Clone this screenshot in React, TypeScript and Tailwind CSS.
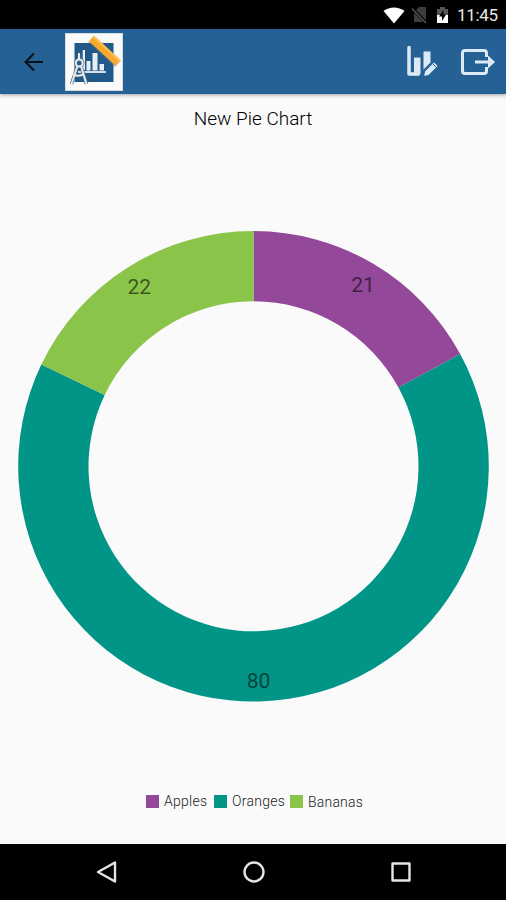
const slices = [
  { label: 'Apples', value: 21, color: '#94489a', swatch: 'bg-[#94489a]', x: 363, y: 61.5 },
  { label: 'Oranges', value: 80, color: '#009586', swatch: 'bg-[#009586]', x: 258.5, y: 458 },
  { label: 'Bananas', value: 22, color: '#8ac449', swatch: 'bg-[#8ac449]', x: 139.2, y: 64 },
];

const CX = 253.5;
const CY = 236.3;
const OUTER = 235.3;
const INNER = 165;

function arcPath(from: number, to: number) {
  const point = (r: number, a: number) => `${CX + r * Math.sin(a)} ${CY - r * Math.cos(a)}`;
  const large = to - from > Math.PI ? 1 : 0;
  return `M${point(OUTER, from)}A${OUTER} ${OUTER} 0 ${large} 1 ${point(OUTER, to)}L${point(INNER, to)}A${INNER} ${INNER} 0 ${large} 0 ${point(INNER, from)}Z`;
}

function StatusBar() {
  return (
    <div className="flex h-[29px] shrink-0 items-center justify-end bg-black pr-2 text-[#e8e8e8]">
      <svg className="mr-[6px] h-[18px] w-[22px]" viewBox="0 0 22 18">
        <path d="M.5 5C6.5.2 15.500.2 21.500 5L11 17.500Z" fill="#fff" />
      </svg>
      <svg className="mr-[8px] h-[18px] w-[17px]" viewBox="0 0 17 18">
        <path d="M5 4 8 1h7v15H3V6Z" fill="#3d3d3d" />
        <path d="M.5 1.500 15.500 17" stroke="#000" strokeWidth="3" />
        <path d="M1 2.500 15 17" stroke="#555" strokeWidth="1.400" />
      </svg>
      <svg className="mr-[8px] h-[18px] w-[13px]" viewBox="0 0 13 18">
        <path d="M1 3h3V1h5v2h3v6H1Z" fill="#555" />
        <path d="M1 9h11v8H1Z" fill="#fff" />
        <path d="M7.500 4 3 10.500h3V15l4-6.500H7.500Z" fill="#000" />
      </svg>
      <span className="w-[41px] whitespace-nowrap text-[17px] leading-5 tracking-[-0.3px]">11:45</span>
    </div>
  );
}

function Logo() {
  return (
    <svg className="ml-[21px] h-[58px] w-[58px]" viewBox="0 0 58 58">
      <rect x=".5" y=".5" width="57" height="57" fill="#fafafa" stroke="#d4dce2" />
      <rect x="9.500" y="10" width="39" height="39" fill="#20598a" />
      <path d="M13 39h28" stroke="#e8eff4" strokeWidth="1.800" />
      <path d="M17.700 17h2.300v20h-2.300ZM21.500 28h4v9.500h-4ZM27.500 20h5v17.500h-5ZM34.500 31h4.500v6.500h-4.500Z" fill="#e8eff4" />
      <g fill="none" stroke="#53677a" strokeWidth="3.400">
        <path d="M14 21v6M12.500 33 6.500 51M16 33l5.500 18M8 41.500q6 3 11-1" />
        <circle cx="14.200" cy="30" r="3.500" />
      </g>
      <g fill="none" stroke="#e6ebee" strokeWidth="2">
        <path d="M14 20v7M12.500 33 6.500 51M16 33l5.500 18M8 41.500q6 3 11-1" />
        <circle cx="14.200" cy="30" r="3.500" />
      </g>
      <path d="m26 6 27 25" stroke="#7b776a" strokeOpacity=".4" strokeWidth="9" />
      <path d="m26.500 5.500 26.500 24.500" stroke="#f5a930" strokeWidth="7.500" />
      <path d="m28.300 3.500 26.500 24.500" stroke="#ffc04c" strokeWidth="2" />
    </svg>
  );
}

function Toolbar() {
  return (
    <header className="flex h-[65px] shrink-0 items-center bg-[#256194] shadow-[0_1px_4px_rgba(35,45,75,0.45)]">
      <svg className="ml-6 h-5 w-5" viewBox="0 0 20 20" fill="none" stroke="#071019" strokeWidth="2">
        <path d="M19 10H2M10 1.500 1.500 10l8.500 8.500" />
      </svg>
      <Logo />
      <div className="ml-auto flex items-center">
        <svg className="h-[34px] w-[34px]" viewBox="0 0 34 34">
          <path d="M3 2.500V29H12" fill="none" stroke="#dceaf6" strokeWidth="3.500" strokeLinejoin="round" strokeLinecap="round" />
          <path d="M8 12.500H14.500V28q0 2.500-2.500 2.500H8ZM17.500 6.500h7v11L17.500 24.500Z" fill="#dceaf6" />
          <path d="m17.500 31.500 1-5.500 9.500-9.500 4.500 4.500-9.500 9.500Z" fill="#dceaf6" stroke="#256194" strokeWidth="1.200" />
          <path d="m26.200 18.200 4.400 4.400" stroke="#256194" strokeWidth="1" />
        </svg>
        <svg className="ml-5 mr-2.5 h-[30px] w-9" viewBox="0 0 36 30" fill="none" stroke="#dceaf6" strokeWidth="3">
          <path d="M26.500 10V6q0-2.500-2.500-2.500H5Q2.500 3.500 2.500 6v18Q2.500 26.500 5 26.500h19q2.500 0 2.500-2.500v-4M15 15h14" />
          <path d="M28 8.500 35 15l-7 6.500Z" fill="#dceaf6" stroke="none" />
        </svg>
      </div>
    </header>
  );
}

function DonutChart() {
  const total = slices.reduce((sum, s) => sum + s.value, 0);
  let angle = 0;
  return (
    <svg className="mt-[100px] block h-[474px] w-[506px] shrink-0" viewBox="0 0 506 474">
      {slices.map((s) => {
        const start = angle;
        angle += (s.value / total) * Math.PI * 2;
        return <path key={s.label} d={arcPath(start, angle)} fill={s.color} />;
      })}
      {slices.map((s) => (
        <text key={s.label} x={s.x} y={s.y} textAnchor="middle" fill="#000" fillOpacity=".58" className="text-[21px]">
          {s.value}
        </text>
      ))}
    </svg>
  );
}

function Legend() {
  return (
    <div className="ml-[146px] mt-[89px] flex h-4 items-center text-[14px] font-light leading-4 text-[#222]">
      {slices.map((s, i) => (
        <div key={s.label} className={['flex w-[68px] items-center', 'flex w-[76px] items-center', 'flex items-center'][i]}>
          <span className={`mr-[5px] h-[13px] w-[13px] shrink-0 ${s.swatch}`} />
          <span className={i === 2 ? 'pt-px tracking-[0.2px]' : 'tracking-[0.25px]'}>{s.label}</span>
        </div>
      ))}
    </div>
  );
}

function NavBar() {
  return (
    <nav className="flex h-14 shrink-0 items-center justify-between bg-black pl-[94px] pr-[92px]">
      {['M21 3.500v19L4 13Z', 'M13 3.500a9.500 9.500 0 1 1 0 19a9.500 9.500 0 1 1 0-19Z', 'M4.500 4.500h17v17h-17Z'].map((d) => (
        <svg key={d} className="h-[26px] w-[26px]" viewBox="0 0 26 26" fill="none" stroke="#e4e4e4" strokeWidth="2.400" strokeLinejoin="round">
          <path d={d} />
        </svg>
      ))}
    </nav>
  );
}

export default function App() {
  return (
    <div className="flex h-[900px] w-[506px] flex-col overflow-hidden bg-[#fafafa] font-[Roboto,sans-serif]">
      <StatusBar />
      <Toolbar />
      <main className="flex min-h-0 flex-1 flex-col pt-[13px]">
        <h1 className="h-[23px] text-center text-[19px] font-light leading-[23px] text-black">New Pie Chart</h1>
        <DonutChart />
        <Legend />
      </main>
      <NavBar />
    </div>
  );
}
